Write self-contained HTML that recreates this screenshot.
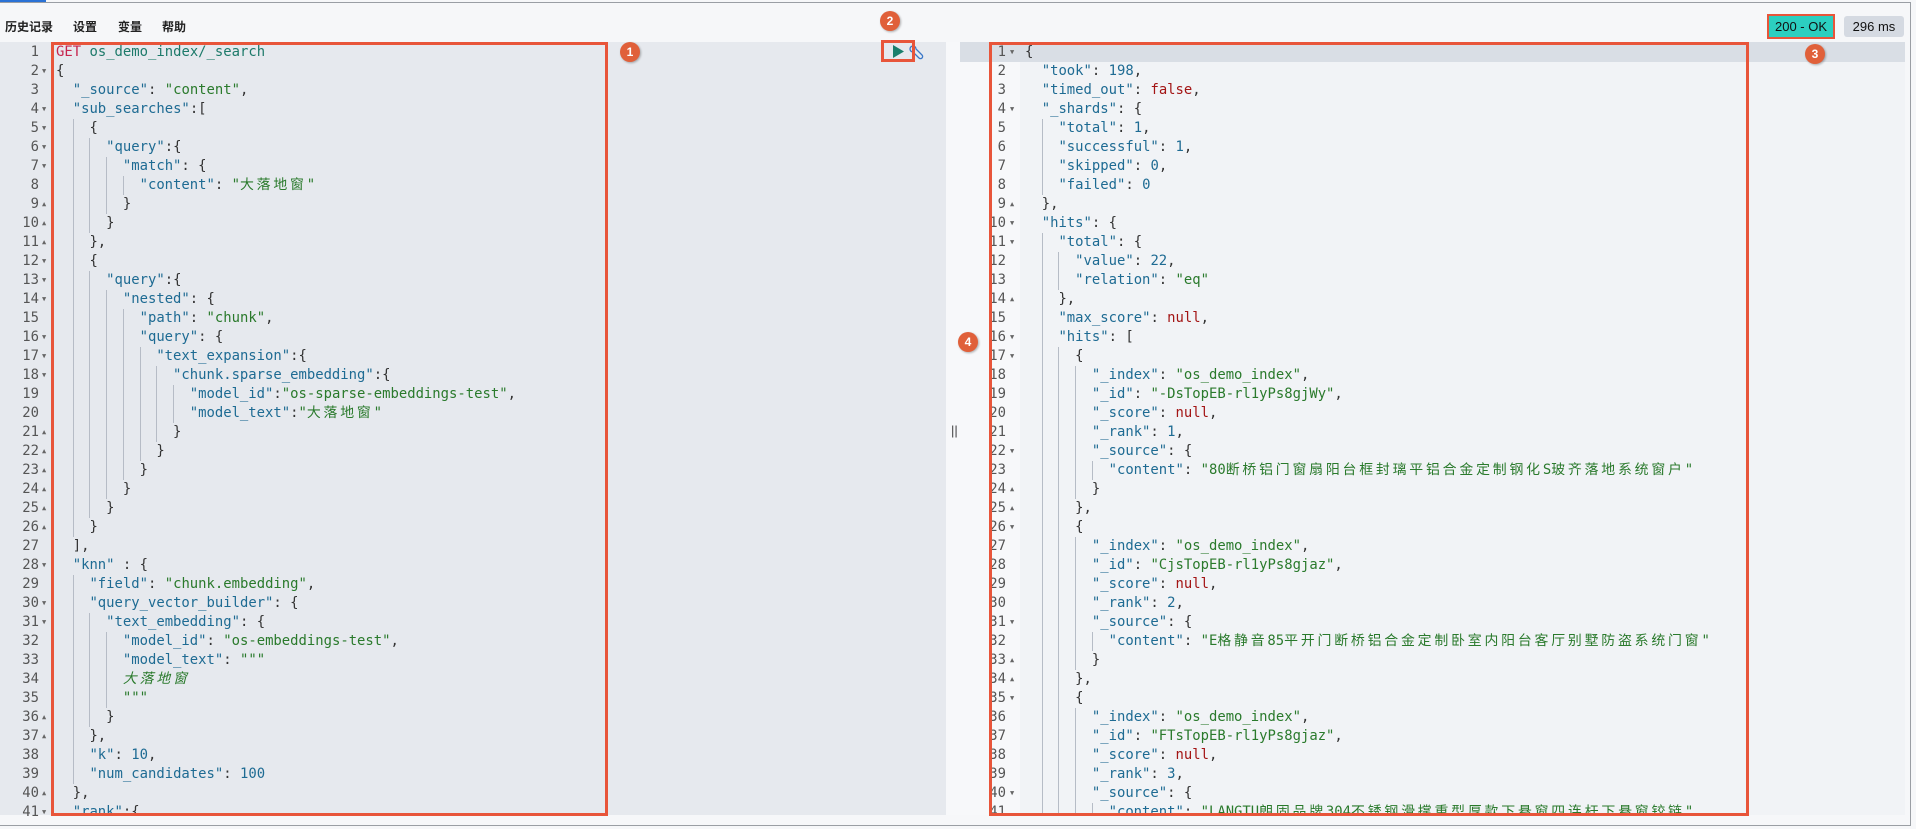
<!DOCTYPE html>
<html><head><meta charset="utf-8"><style>
*{margin:0;padding:0;box-sizing:border-box}
body{width:1916px;height:829px;overflow:hidden;background:#f6f7f9;font-family:"Liberation Sans","Noto Sans CJK SC",sans-serif;position:relative}
.frame{position:absolute;left:0;top:2px;width:1911px;height:824px;border:1px solid #9a9ea4;border-left:none}
.tab{position:absolute;left:0;top:0;width:46px;height:3px;background:#2a72d6}
.menu{position:absolute;top:18px;font-size:12px;color:#222;font-weight:bold}
.lp{position:absolute;left:0;top:42px;width:946px;height:773px;background:#e6e9ee}
.mid{position:absolute;left:946px;top:42px;width:14px;height:773px;background:#f7f8fa}
.rp{position:absolute;left:960px;top:42px;width:945px;height:773px;background:#f1f3f6}
.rg{position:absolute;left:960px;top:42px;width:60px;height:773px;background:#f7f8fa}
.hl{position:absolute;left:960px;top:42px;width:945px;height:20px;background:#d9dee5}
.code,.nums{position:absolute;top:43px;font-family:"DejaVu Sans Mono","Noto Sans CJK SC",monospace;font-size:13.9px;line-height:19px;white-space:normal;color:#333}
.code div,.nums div{white-space:pre;height:19px}
.nums{text-align:right;color:#555}
.nums div{position:relative}
.f{position:absolute;font-size:7px;color:#666}
b,i{display:inline-block;width:2ch;height:19px;vertical-align:top}
i{border-left:1px solid #b6bcc6}
.k{color:#1e6b93}.s{color:#2a7a2c}.n{color:#1e6b93}.r{color:#a31515}.g{color:#c7254e}.t{color:#1d7a6a}
.c{letter-spacing:2.8px}
.box{position:absolute;border:3px solid #e8553a}
.mk{position:absolute;width:20px;height:20px;border-radius:50%;background:#e0603a;color:#fff;font-size:12px;font-weight:bold;text-align:center;line-height:20px;box-shadow:1px 1px 2px rgba(0,0,0,.3)}
</style></head><body>
<div class="tab"></div><div class="frame"></div>
<div class="menu" style="left:5px">历史记录</div>
<div class="menu" style="left:73px">设置</div>
<div class="menu" style="left:118px">变量</div>
<div class="menu" style="left:162px">帮助</div>
<div style="position:absolute;left:1767px;top:14px;width:68px;height:25px;background:#2ccfc0;border:2px solid #e8553a;font-size:13px;text-align:center;line-height:21px;color:#111">200 - OK</div>
<div style="position:absolute;left:1844px;top:16px;width:60px;height:21px;background:#d5dae2;border-radius:3px;font-size:13px;text-align:center;line-height:21px;color:#111">296 ms</div>
<div class="lp"></div><div class="mid"></div><div class="rp"></div><div class="rg"></div><div class="hl"></div>
<div style="position:absolute;left:951px;top:423px;font-size:13px;color:#444">||</div>
<svg style="position:absolute;left:893px;top:44px" width="36" height="16"><path d="M0 1 L11 7.5 L0 14Z" fill="#1a7f6c"/><g fill="none" stroke="#3b78c8" stroke-width="1.3"><path d="M20 2 a3 3 0 0 0 0 6 l6 6 a2 2 0 0 0 3-3 l-6-6 a3 3 0 0 0-3-3z"/></g></svg>
<div class="box" style="left:881px;top:40px;width:34px;height:22px"></div>

<div class="nums" style="left:0;width:39px">
<div>1</div><div>2<span class="f" style="left:42px">▼</span></div><div>3</div><div>4<span class="f" style="left:42px">▼</span></div><div>5<span class="f" style="left:42px">▼</span></div><div>6<span class="f" style="left:42px">▼</span></div><div>7<span class="f" style="left:42px">▼</span></div><div>8</div><div>9<span class="f" style="left:42px">▲</span></div><div>10<span class="f" style="left:42px">▲</span></div><div>11<span class="f" style="left:42px">▲</span></div><div>12<span class="f" style="left:42px">▼</span></div><div>13<span class="f" style="left:42px">▼</span></div><div>14<span class="f" style="left:42px">▼</span></div><div>15</div><div>16<span class="f" style="left:42px">▼</span></div><div>17<span class="f" style="left:42px">▼</span></div><div>18<span class="f" style="left:42px">▼</span></div><div>19</div><div>20</div><div>21<span class="f" style="left:42px">▲</span></div><div>22<span class="f" style="left:42px">▲</span></div><div>23<span class="f" style="left:42px">▲</span></div><div>24<span class="f" style="left:42px">▲</span></div><div>25<span class="f" style="left:42px">▲</span></div><div>26<span class="f" style="left:42px">▲</span></div><div>27</div><div>28<span class="f" style="left:42px">▼</span></div><div>29</div><div>30<span class="f" style="left:42px">▼</span></div><div>31<span class="f" style="left:42px">▼</span></div><div>32</div><div>33</div><div>34</div><div>35</div><div>36<span class="f" style="left:42px">▲</span></div><div>37<span class="f" style="left:42px">▲</span></div><div>38</div><div>39</div><div>40<span class="f" style="left:42px">▲</span></div><div>41<span class="f" style="left:42px">▼</span></div>
</div>
<div class="code" style="left:56px;width:870px;height:772px;overflow:hidden">
<div><span class="g">GET</span> <span class="t">os_demo_index/_search</span></div>
<div>{</div>
<div><b></b><span class="k">"_source"</span>: <span class="s">"content"</span>,</div>
<div><b></b><span class="k">"sub_searches"</span>:[</div>
<div><b></b><i></i>{</div>
<div><b></b><i></i><i></i><span class="k">"query"</span>:{</div>
<div><b></b><i></i><i></i><i></i><span class="k">"match"</span>: {</div>
<div><b></b><i></i><i></i><i></i><i></i><span class="k">"content"</span>: <span class="s">"<span class="c">大落地窗</span>"</span></div>
<div><b></b><i></i><i></i><i></i>}</div>
<div><b></b><i></i><i></i>}</div>
<div><b></b><i></i>},</div>
<div><b></b><i></i>{</div>
<div><b></b><i></i><i></i><span class="k">"query"</span>:{</div>
<div><b></b><i></i><i></i><i></i><span class="k">"nested"</span>: {</div>
<div><b></b><i></i><i></i><i></i><i></i><span class="k">"path"</span>: <span class="s">"chunk"</span>,</div>
<div><b></b><i></i><i></i><i></i><i></i><span class="k">"query"</span>: {</div>
<div><b></b><i></i><i></i><i></i><i></i><i></i><span class="k">"text_expansion"</span>:{</div>
<div><b></b><i></i><i></i><i></i><i></i><i></i><i></i><span class="k">"chunk.sparse_embedding"</span>:{</div>
<div><b></b><i></i><i></i><i></i><i></i><i></i><i></i><i></i><span class="k">"model_id"</span>:<span class="s">"os-sparse-embeddings-test"</span>,</div>
<div><b></b><i></i><i></i><i></i><i></i><i></i><i></i><i></i><span class="k">"model_text"</span>:<span class="s">"<span class="c">大落地窗</span>"</span></div>
<div><b></b><i></i><i></i><i></i><i></i><i></i><i></i>}</div>
<div><b></b><i></i><i></i><i></i><i></i><i></i>}</div>
<div><b></b><i></i><i></i><i></i><i></i>}</div>
<div><b></b><i></i><i></i><i></i>}</div>
<div><b></b><i></i><i></i>}</div>
<div><b></b><i></i>}</div>
<div><b></b>],</div>
<div><b></b><span class="k">"knn"</span> : {</div>
<div><b></b><i></i><span class="k">"field"</span>: <span class="s">"chunk.embedding"</span>,</div>
<div><b></b><i></i><span class="k">"query_vector_builder"</span>: {</div>
<div><b></b><i></i><i></i><span class="k">"text_embedding"</span>: {</div>
<div><b></b><i></i><i></i><i></i><span class="k">"model_id"</span>: <span class="s">"os-embeddings-test"</span>,</div>
<div><b></b><i></i><i></i><i></i><span class="k">"model_text"</span>: <span class="s">"""</span></div>
<div><b></b><i></i><i></i><i></i><span class="s c" style="font-style:italic">大落地窗</span></div>
<div><b></b><i></i><i></i><i></i><span class="s">"""</span></div>
<div><b></b><i></i><i></i>}</div>
<div><b></b><i></i>},</div>
<div><b></b><i></i><span class="k">"k"</span>: <span class="n">10</span>,</div>
<div><b></b><i></i><span class="k">"num_candidates"</span>: <span class="n">100</span></div>
<div><b></b>},</div>
<div><b></b><span class="k">"rank"</span>:{</div>
</div>

<div class="nums" style="left:960px;width:46px">
<div>1<span class="f" style="left:50px">▼</span></div><div>2</div><div>3</div><div>4<span class="f" style="left:50px">▼</span></div><div>5</div><div>6</div><div>7</div><div>8</div><div>9<span class="f" style="left:50px">▲</span></div><div>10<span class="f" style="left:50px">▼</span></div><div>11<span class="f" style="left:50px">▼</span></div><div>12</div><div>13</div><div>14<span class="f" style="left:50px">▲</span></div><div>15</div><div>16<span class="f" style="left:50px">▼</span></div><div>17<span class="f" style="left:50px">▼</span></div><div>18</div><div>19</div><div>20</div><div>21</div><div>22<span class="f" style="left:50px">▼</span></div><div>23</div><div>24<span class="f" style="left:50px">▲</span></div><div>25<span class="f" style="left:50px">▲</span></div><div>26<span class="f" style="left:50px">▼</span></div><div>27</div><div>28</div><div>29</div><div>30</div><div>31<span class="f" style="left:50px">▼</span></div><div>32</div><div>33<span class="f" style="left:50px">▲</span></div><div>34<span class="f" style="left:50px">▲</span></div><div>35<span class="f" style="left:50px">▼</span></div><div>36</div><div>37</div><div>38</div><div>39</div><div>40<span class="f" style="left:50px">▼</span></div><div>41</div>
</div>
<div class="code" style="left:1025px;width:870px;height:772px;overflow:hidden">
<div>{</div>
<div><b></b><span class="k">"took"</span>: <span class="n">198</span>,</div>
<div><b></b><span class="k">"timed_out"</span>: <span class="r">false</span>,</div>
<div><b></b><span class="k">"_shards"</span>: {</div>
<div><b></b><i></i><span class="k">"total"</span>: <span class="n">1</span>,</div>
<div><b></b><i></i><span class="k">"successful"</span>: <span class="n">1</span>,</div>
<div><b></b><i></i><span class="k">"skipped"</span>: <span class="n">0</span>,</div>
<div><b></b><i></i><span class="k">"failed"</span>: <span class="n">0</span></div>
<div><b></b>},</div>
<div><b></b><span class="k">"hits"</span>: {</div>
<div><b></b><i></i><span class="k">"total"</span>: {</div>
<div><b></b><i></i><i></i><span class="k">"value"</span>: <span class="n">22</span>,</div>
<div><b></b><i></i><i></i><span class="k">"relation"</span>: <span class="s">"eq"</span></div>
<div><b></b><i></i>},</div>
<div><b></b><i></i><span class="k">"max_score"</span>: <span class="r">null</span>,</div>
<div><b></b><i></i><span class="k">"hits"</span>: [</div>
<div><b></b><i></i><i></i>{</div>
<div><b></b><i></i><i></i><i></i><span class="k">"_index"</span>: <span class="s">"os_demo_index"</span>,</div>
<div><b></b><i></i><i></i><i></i><span class="k">"_id"</span>: <span class="s">"-DsTopEB-rl1yPs8gjWy"</span>,</div>
<div><b></b><i></i><i></i><i></i><span class="k">"_score"</span>: <span class="r">null</span>,</div>
<div><b></b><i></i><i></i><i></i><span class="k">"_rank"</span>: <span class="n">1</span>,</div>
<div><b></b><i></i><i></i><i></i><span class="k">"_source"</span>: {</div>
<div><b></b><i></i><i></i><i></i><i></i><span class="k">"content"</span>: <span class="s">"80<span class="c">断桥铝门窗扇阳台框封璃平铝合金定制钢化</span>S<span class="c">玻齐落地系统窗户</span>"</span></div>
<div><b></b><i></i><i></i><i></i>}</div>
<div><b></b><i></i><i></i>},</div>
<div><b></b><i></i><i></i>{</div>
<div><b></b><i></i><i></i><i></i><span class="k">"_index"</span>: <span class="s">"os_demo_index"</span>,</div>
<div><b></b><i></i><i></i><i></i><span class="k">"_id"</span>: <span class="s">"CjsTopEB-rl1yPs8gjaz"</span>,</div>
<div><b></b><i></i><i></i><i></i><span class="k">"_score"</span>: <span class="r">null</span>,</div>
<div><b></b><i></i><i></i><i></i><span class="k">"_rank"</span>: <span class="n">2</span>,</div>
<div><b></b><i></i><i></i><i></i><span class="k">"_source"</span>: {</div>
<div><b></b><i></i><i></i><i></i><i></i><span class="k">"content"</span>: <span class="s">"E<span class="c">格静音</span>85<span class="c">平开门断桥铝合金定制卧室内阳台客厅别墅防盗系统门窗</span>"</span></div>
<div><b></b><i></i><i></i><i></i>}</div>
<div><b></b><i></i><i></i>},</div>
<div><b></b><i></i><i></i>{</div>
<div><b></b><i></i><i></i><i></i><span class="k">"_index"</span>: <span class="s">"os_demo_index"</span>,</div>
<div><b></b><i></i><i></i><i></i><span class="k">"_id"</span>: <span class="s">"FTsTopEB-rl1yPs8gjaz"</span>,</div>
<div><b></b><i></i><i></i><i></i><span class="k">"_score"</span>: <span class="r">null</span>,</div>
<div><b></b><i></i><i></i><i></i><span class="k">"_rank"</span>: <span class="n">3</span>,</div>
<div><b></b><i></i><i></i><i></i><span class="k">"_source"</span>: {</div>
<div><b></b><i></i><i></i><i></i><i></i><span class="k">"content"</span>: <span class="s">"LANGTU<span class="c">朗固品牌</span>304<span class="c">不锈钢滑撑重型厚款下悬窗四连杆下悬窗铰链</span>"</span></div>
</div>

<div class="box" style="left:51px;top:42px;width:557px;height:774px"></div>
<div class="box" style="left:989px;top:42px;width:760px;height:774px"></div>
<div class="mk" style="left:620px;top:42px">1</div>
<div class="mk" style="left:880px;top:11px">2</div>
<div class="mk" style="left:1805px;top:44px">3</div>
<div class="mk" style="left:958px;top:332px">4</div>
</body></html>
